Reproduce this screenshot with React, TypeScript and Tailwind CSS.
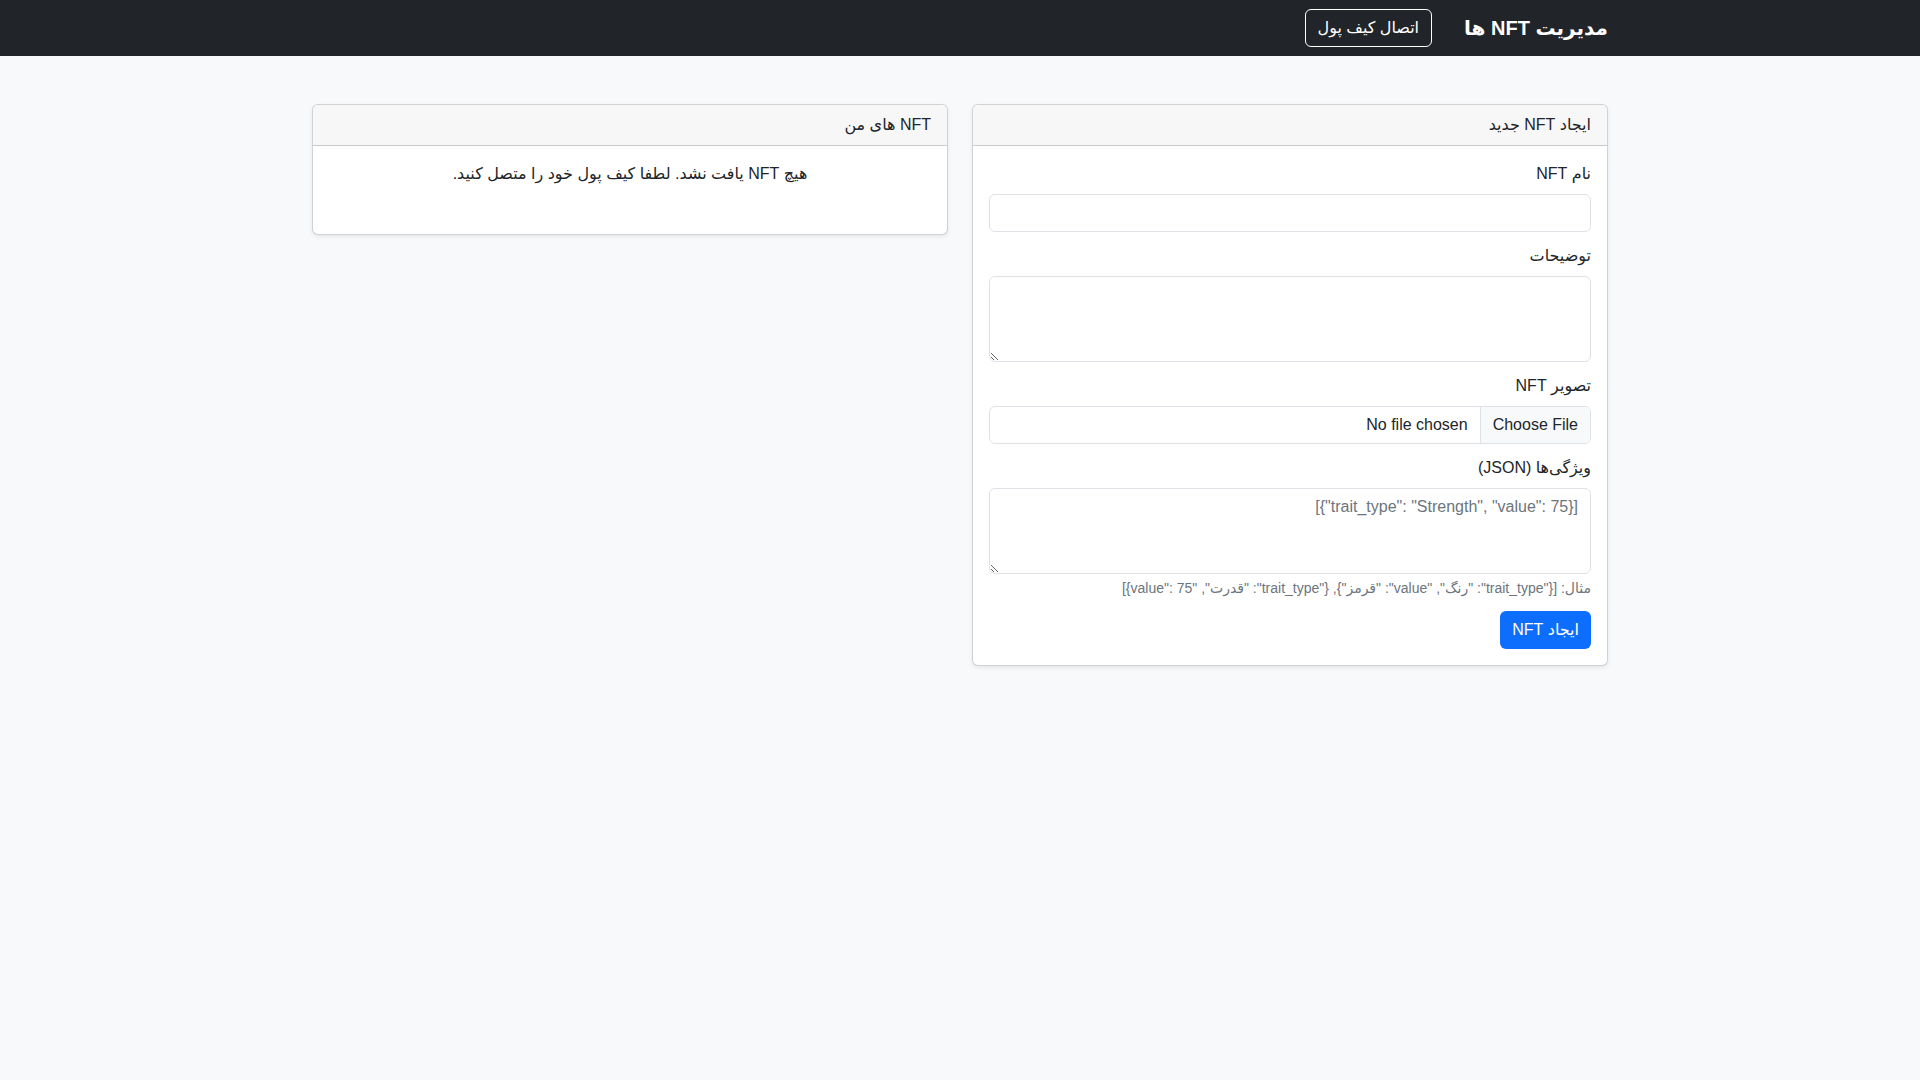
export default function App() {
  const font = { fontFamily: '"Liberation Sans", "DejaVu Sans", "Noto Sans", sans-serif' };
  return (
    <div dir="rtl" style={font} className="min-h-[1080px] bg-[#f8f9fa] text-[16px] text-[#212529]">
      {/* Navbar */}
      <nav className="h-[56px] bg-[#212529]">
        <div className="mx-auto flex h-full w-[1320px] items-center px-3">
          <span className="ml-4 text-[20px] font-bold text-white">مدیریت NFT ها</span>
          <button className="mr-4 h-[38px] rounded-[6px] border border-white px-3 text-[16px] text-white">
            اتصال کیف پول
          </button>
        </div>
      </nav>

      <div className="mx-auto mt-[48px] w-[1320px] px-3">
        <div className="grid grid-cols-2 gap-6">
          {/* Create NFT */}
          <div className="self-start rounded-[6px] border border-black/[0.176] bg-white shadow-[0_2px_4px_rgba(0,0,0,0.075)]">
            <div className="border-b border-black/[0.176] bg-[#f7f7f7] px-4 py-2 leading-6 rounded-t-[6px]">
              ایجاد NFT جدید
            </div>
            <div className="p-4">
              <div className="mb-3">
                <label className="mb-2 block leading-6">نام NFT</label>
                <input className="block h-[38px] w-full rounded-[6px] border border-[#dee2e6] px-3" />
              </div>
              <div className="mb-3">
                <label className="mb-2 block leading-6">توضیحات</label>
                <textarea rows={3} className="block h-[86px] w-full rounded-[6px] border border-[#dee2e6] px-3 py-1.5" />
              </div>
              <div className="mb-3">
                <label className="mb-2 block leading-6">تصویر NFT</label>
                <div className="flex h-[38px] w-full overflow-hidden rounded-[6px] border border-[#dee2e6]">
                  <span className="flex items-center border-l border-[#dee2e6] bg-[#f8f9fa] px-3">Choose File</span>
                  <span className="flex items-center px-3">No file chosen</span>
                </div>
              </div>
              <div className="mb-3">
                <label className="mb-2 block leading-6">ویژگی‌ها (JSON)</label>
                <textarea
                  rows={3}
                  placeholder={'[{trait_type": "Strength", "value": 75"}]'}
                  className="block h-[86px] w-full rounded-[6px] border border-[#dee2e6] px-3 py-1.5 placeholder:text-[#6c757d]"
                />
                <div className="mt-1 text-[14px] text-[#6c757d]">
                  مثال: [{'{'}"trait_type": "رنگ", "value": "قرمز"{'}'}, {'{'}"trait_type": "قدرت", "value": 75{'}'}]
                </div>
              </div>
              <button className="h-[38px] rounded-[6px] bg-[#0d6efd] px-3 text-white">ایجاد NFT</button>
            </div>
          </div>

          {/* My NFTs */}
          <div className="self-start rounded-[6px] border border-black/[0.176] bg-white shadow-[0_2px_4px_rgba(0,0,0,0.075)]">
            <div className="border-b border-black/[0.176] bg-[#f7f7f7] px-4 py-2 leading-6 rounded-t-[6px]">
              NFT های من
            </div>
            <div className="p-4 pb-[48px] text-center leading-6">
              هیچ NFT یافت نشد. لطفا کیف پول خود را متصل کنید.
            </div>
          </div>
        </div>
      </div>
    </div>
  );
}
